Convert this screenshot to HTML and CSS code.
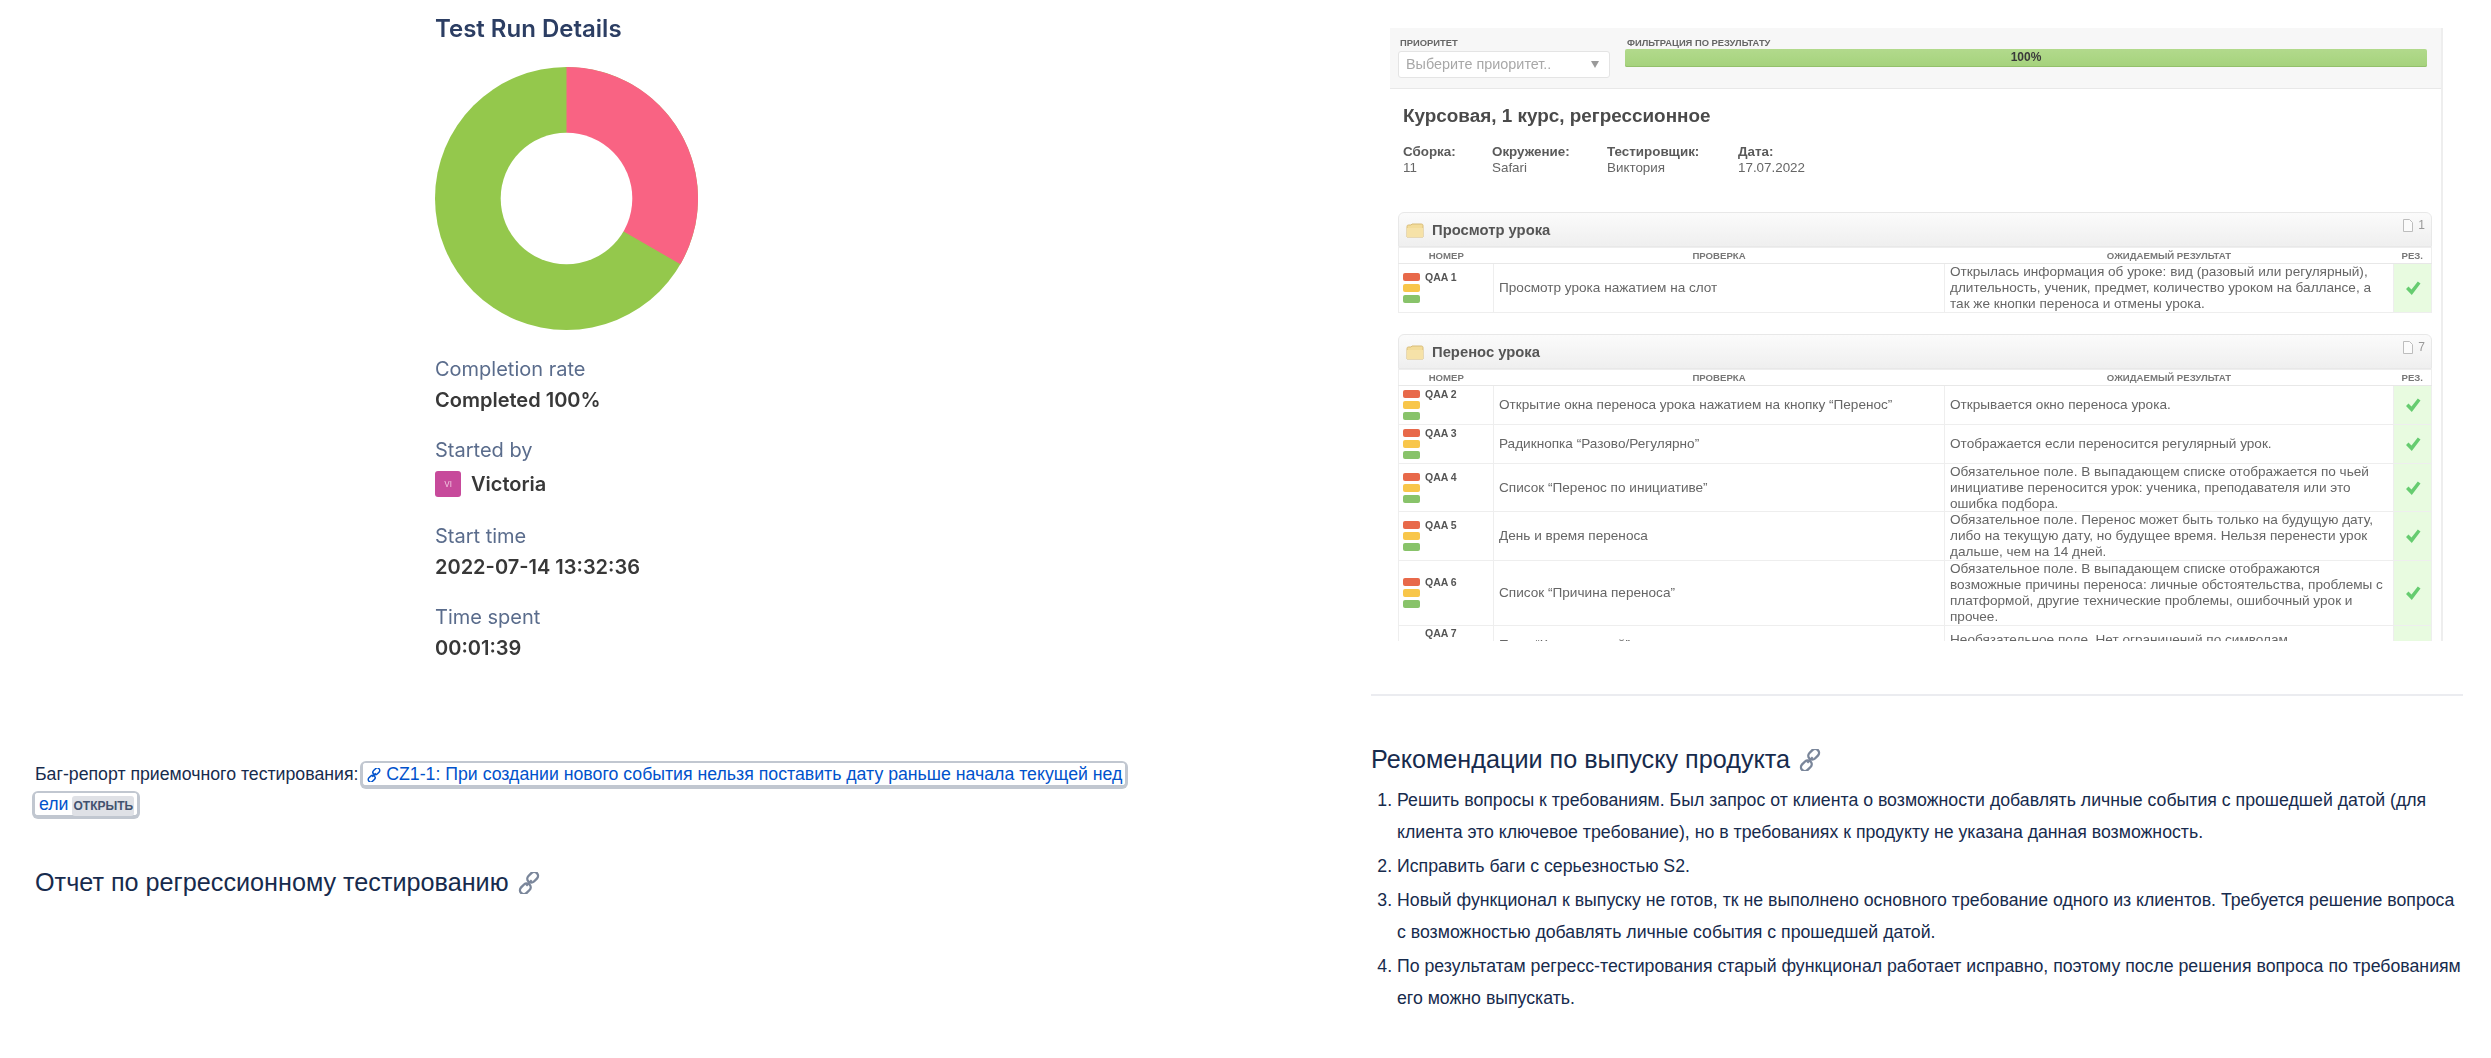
FILE: index.html
```html
<!DOCTYPE html>
<html lang="ru">
<head>
    <meta charset="UTF-8">
    <title>Отчет о тестировании</title>
    <link rel="stylesheet" href="styles.css">
</head>
<body>
    <svg class="defs" width="0" height="0">
        <symbol id="chain" viewBox="0 0 24 24">
            <g fill="none" stroke="currentColor" stroke-width="2.6">
                <rect x="9.5" y="1.5" width="13" height="8.5" rx="4.25" transform="rotate(-45 16 5.75)"/>
                <rect x="1.5" y="14" width="13" height="8.5" rx="4.25" transform="rotate(-45 8 18.25)"/>
                <path d="M9 15l6-6" />
            </g>
        </symbol>
        <symbol id="folder" viewBox="0 0 18 15">
            <path d="M1 3.5C1 2.5 1.6 2 2.5 2H5l1-1h9.500c.8 0 1.500.6 1.500 1.500V14H1z" fill="#f3dc9a" stroke="#d8bc78"/>
            <path d="M1 5h16v9H1z" fill="#f6e2a8"/>
        </symbol>
        <symbol id="doc" viewBox="0 0 10 13">
            <path d="M.5.5H6.500L9.500 3.500V12.500H.5z" fill="#fbfbfb" stroke="#bdbdbd"/>
        </symbol>
        <symbol id="tick" viewBox="0 0 16 16">
            <path d="M1 9l2.500-2.500L6.500 9.500 12.800 1.500 15.500 3.500 6.800 15z" fill="#66cc70"/>
        </symbol>
    </svg>

    <div class="page">
        <div class="col-left">
            <div class="details">
                <h3 class="details-title">Test Run Details</h3>
                <svg class="donut" width="263" height="263" viewBox="0 0 263 263">
                    <circle cx="131.500" cy="131.500" r="131.500" fill="#94c84c"/>
                    <path d="M131.500 131.500V0A131.500 131.500 0 0 1 245.400 197.250Z" fill="#f96383"/>
                    <circle cx="131.500" cy="131.500" r="65.800" fill="#fff"/>
                </svg>
                <div class="field first">Completion rate</div>
                <div class="value">Completed 100%</div>
                <div class="field">Started by</div>
                <div class="user">
                    <span class="avatar">VI</span>
                    <span class="value">Victoria</span>
                </div>
                <div class="field after-user">Start time</div>
                <div class="value">2022-07-14 13:32:36</div>
                <div class="field">Time spent</div>
                <div class="value">00:01:39</div>
            </div>

            <p class="bug-line">Баг-репорт приемочного тестирования: <a class="card-link" href="#"><svg class="card-icon"><use href="#chain"/></svg> CZ1-1: При создании нового события нельзя поставить дату раньше начала текущей недели<span class="lozenge">Открыть</span></a></p>

            <h2 class="heading regress">Отчет по регрессионному тестированию <svg class="anchor"><use href="#chain"/></svg></h2>
        </div>

        <div class="col-right">
            <div class="shot">
                <div class="filters">
                    <div class="filter-priority">
                        <div class="filter-label">Приоритет</div>
                        <div class="select">Выберите приоритет..<span class="caret"></span></div>
                    </div>
                    <div class="filter-result">
                        <div class="filter-label">Фильтрация по результату</div>
                        <div class="progress">100%</div>
                    </div>
                </div>

                <h4 class="run-title">Курсовая, 1 курс, регрессионное</h4>
                <div class="meta">
                    <div class="meta-item build"><b>Сборка:</b>11</div>
                    <div class="meta-item env"><b>Окружение:</b>Safari</div>
                    <div class="meta-item tester"><b>Тестировщик:</b>Виктория</div>
                    <div class="meta-item date"><b>Дата:</b>17.07.2022</div>
                </div>

                <div class="group">
                    <div class="group-head">
                        <svg class="folder"><use href="#folder"/></svg>
                        <span class="group-name">Просмотр урока</span>
                        <span class="group-count"><svg class="doc"><use href="#doc"/></svg>1</span>
                    </div>
                    <table class="cases">
                        <colgroup><col class="c-num"><col class="c-check"><col class="c-exp"><col class="c-res"></colgroup>
                        <tr><th>Номер</th><th>Проверка</th><th>Ожидаемый результат</th><th>Рез.</th></tr>
                        <tr>
                            <td class="num"><div class="num-wrap"><div class="bars"><i class="red"></i><i class="yellow"></i><i class="green"></i></div><b>QAA 1</b></div></td>
                            <td>Просмотр урока нажатием на слот</td>
                            <td>Открылась информация об уроке: вид (разовый или регулярный), длительность, ученик, предмет, количество уроком на баллансе, а так же кнопки переноса и отмены урока.</td>
                            <td class="res"><svg class="tick"><use href="#tick"/></svg></td>
                        </tr>
                    </table>
                </div>

                <div class="group second">
                    <div class="group-head">
                        <svg class="folder"><use href="#folder"/></svg>
                        <span class="group-name">Перенос урока</span>
                        <span class="group-count"><svg class="doc"><use href="#doc"/></svg>7</span>
                    </div>
                    <table class="cases">
                        <colgroup><col class="c-num"><col class="c-check"><col class="c-exp"><col class="c-res"></colgroup>
                        <tr><th>Номер</th><th>Проверка</th><th>Ожидаемый результат</th><th>Рез.</th></tr>
                        <tr>
                            <td class="num"><div class="num-wrap"><div class="bars"><i class="red"></i><i class="yellow"></i><i class="green"></i></div><b>QAA 2</b></div></td>
                            <td>Открытие окна переноса урока нажатием на кнопку “Перенос”</td>
                            <td>Открывается окно переноса урока.</td>
                            <td class="res"><svg class="tick"><use href="#tick"/></svg></td>
                        </tr>
                        <tr>
                            <td class="num"><div class="num-wrap"><div class="bars"><i class="red"></i><i class="yellow"></i><i class="green"></i></div><b>QAA 3</b></div></td>
                            <td>Радикнопка “Разово/Регулярно”</td>
                            <td>Отображается если переносится регулярный урок.</td>
                            <td class="res"><svg class="tick"><use href="#tick"/></svg></td>
                        </tr>
                        <tr>
                            <td class="num"><div class="num-wrap"><div class="bars"><i class="red"></i><i class="yellow"></i><i class="green"></i></div><b>QAA 4</b></div></td>
                            <td>Список “Перенос по инициативе”</td>
                            <td>Обязательное поле. В выпадающем списке отображается по чьей инициативе переносится урок: ученика, преподавателя или это ошибка подбора.</td>
                            <td class="res"><svg class="tick"><use href="#tick"/></svg></td>
                        </tr>
                        <tr>
                            <td class="num"><div class="num-wrap"><div class="bars"><i class="red"></i><i class="yellow"></i><i class="green"></i></div><b>QAA 5</b></div></td>
                            <td>День и время переноса</td>
                            <td>Обязательное поле. Перенос может быть только на будущую дату, либо на текущую дату, но будущее время. Нельзя перенести урок дальше, чем на 14 дней.</td>
                            <td class="res"><svg class="tick"><use href="#tick"/></svg></td>
                        </tr>
                        <tr>
                            <td class="num"><div class="num-wrap"><div class="bars"><i class="red"></i><i class="yellow"></i><i class="green"></i></div><b>QAA 6</b></div></td>
                            <td>Список “Причина переноса”</td>
                            <td>Обязательное поле. В выпадающем списке отображаются возможные причины переноса: личные обстоятельства, проблемы с платформой, другие технические проблемы, ошибочный урок и прочее.</td>
                            <td class="res"><svg class="tick"><use href="#tick"/></svg></td>
                        </tr>
                        <tr class="cut">
                            <td class="num"><div class="num-wrap"><div class="bars"><i class="olive"></i></div><b>QAA 7</b></div></td>
                            <td class="check">Поле “Комментарий”</td>
                            <td>Необязательное поле. Нет ограничений по символам.<br>&nbsp;</td>
                            <td class="res"><svg class="tick"><use href="#tick"/></svg></td>
                        </tr>
                    </table>
                </div>
            </div>

            <hr class="rule">

            <h2 class="heading recs">Рекомендации по выпуску продукта <svg class="anchor"><use href="#chain"/></svg></h2>
            <ol class="recs-list">
                <li>Решить вопросы к требованиям. Был запрос от клиента о возможности добавлять личные события с прошедшей датой (для клиента это ключевое требование), но в требованиях к продукту не указана данная возможность.</li>
                <li>Исправить баги с серьезностью S2.</li>
                <li>Новый функционал к выпуску не готов, тк не выполнено основного требование одного из клиентов. Требуется решение вопроса с возможностью добавлять личные события с прошедшей датой.</li>
                <li>По результатам регресс-тестирования старый функционал работает исправно, поэтому после решения вопроса по требованиям его можно выпускать.</li>
            </ol>
        </div>
    </div>
</body>
</html>
```

FILE: styles.css
```css
body {
    margin: 0;
    background: #ffffff;
    color: #172b4d;
    font-family: 'Liberation Sans', Arial, sans-serif;
    font-size: 17.720px;
}
.defs {
    position: absolute;
}
.page {
    display: flex;
    height: 1058px;
    overflow: hidden;
}
.col-left {
    width: 1371px;
    padding-left: 35px;
    box-sizing: border-box;
}
.col-right {
    width: 1092px;
    padding-top: 28px;
}

/* test run card */
.details {
    margin-left: 400px;
    padding-top: 13px;
    font-family: 'Inter', sans-serif;
    font-size: 20px;
    line-height: 31px;
    filter: blur(0.4px);
}
.details-title {
    margin: 0;
    color: #2c3e63;
    font-size: 24px;
    line-height: 32px;
    font-weight: 600;
}
.donut {
    display: block;
    margin-top: 22px;
}
.field {
    margin-top: 19px;
    color: #5a6c8c;
}
.field.first {
    margin-top: 24px;
}
.field.after-user {
    margin-top: 24px;
}
.value {
    color: #383838;
    font-weight: 600;
}
.user {
    display: flex;
    align-items: center;
    gap: 10px;
    height: 26px;
    margin-top: 5px;
}
.avatar {
    display: flex;
    align-items: center;
    justify-content: center;
    width: 26px;
    height: 26px;
    border-radius: 3px;
    background: #c74a9b;
    color: #f2c8e2;
    font-size: 8px;
}

/* bug report line */
.bug-line {
    width: 1092px;
    margin: 95px 0 0;
    line-height: 30px;
}
.card-link {
    padding: 1px 3px 1px 4px;
    border-radius: 3px;
    background: #ffffff;
    box-shadow: 0 1px 0 3px #c1c7d0;
    color: #0052cc;
    text-decoration: none;
    word-break: break-all;
    -webkit-box-decoration-break: clone;
    box-decoration-break: clone;
}
.card-icon {
    width: 14px;
    height: 14px;
    vertical-align: -2px;
}
.lozenge {
    margin-left: 4px;
    padding: 3px 1px;
    border-radius: 3px;
    background: #dfe1e6;
    color: #42526e;
    font-size: 12px;
    font-weight: bold;
    text-transform: uppercase;
}

.heading {
    margin: 0;
    color: #172b4d;
    font-size: 25.200px;
    font-weight: normal;
    line-height: 32px;
}
.heading.regress {
    margin-top: 45px;
}
.heading.recs {
    margin-top: 47px;
}
.anchor {
    width: 22px;
    height: 22px;
    margin-left: 2px;
    color: #7a869a;
    vertical-align: -3px;
}

/* pasted report screenshot */
.shot {
    height: 613px;
    margin-left: 19px;
    width: 1053px;
    box-sizing: border-box;
    border-right: 2px solid #eeeeee;
    overflow: hidden;
    color: #666666;
    font-size: 13.600px;
    line-height: 15.900px;
    filter: blur(0.45px);
}
.filters {
    display: flex;
    gap: 15px;
    height: 61px;
    padding: 8px 14px 0 8px;
    box-sizing: border-box;
    border-bottom: 1px solid #e8e8e8;
    background: #f7f7f7;
}
.filter-label {
    padding-left: 2px;
    color: #666666;
    font-size: 9.400px;
    font-weight: bold;
    line-height: 14px;
    text-transform: uppercase;
}
.filter-priority {
    width: 212px;
}
.filter-result {
    flex: 1;
}
.select {
    display: flex;
    align-items: center;
    justify-content: space-between;
    height: 27px;
    margin-top: 1px;
    padding: 0 10px 0 7px;
    box-sizing: border-box;
    border: 1px solid #e4e4e4;
    border-radius: 3px;
    background: #ffffff;
    color: #a8a8a8;
    font-size: 14.400px;
}
.caret {
    width: 0;
    height: 0;
    border-left: 4.500px solid transparent;
    border-right: 4.500px solid transparent;
    border-top: 7px solid #9a9a9a;
}
.progress {
    height: 18px;
    margin-top: -1px;
    border-radius: 2px;
    background: linear-gradient(#b2da8c, #a5d27c);
    box-shadow: inset 0 -1px 0 #93c06b;
    color: #3a3a3a;
    font-size: 12px;
    font-weight: bold;
    line-height: 17px;
    text-align: center;
}
.run-title {
    margin: 15px 0 0 13px;
    color: #4a4a4a;
    font-size: 18.900px;
    font-weight: bold;
    line-height: 24px;
}
.meta {
    display: flex;
    margin: 16px 0 0 13px;
    font-size: 13.400px;
    line-height: 15.500px;
}
.meta-item b {
    display: block;
    color: #5a5a5a;
}
.meta-item.build {
    width: 89px;
}
.meta-item.env {
    width: 115px;
}
.meta-item.tester {
    width: 131px;
}
.group {
    width: 1034px;
    margin: 37px 0 0 8px;
}
.group.second {
    margin-top: 21px;
}
.group-head {
    display: flex;
    align-items: flex-start;
    height: 35px;
    box-sizing: border-box;
    padding: 5px 6px 0 7px;
    border: 1px solid #e8e8e8;
    border-radius: 6px 6px 0 0;
    background: linear-gradient(#fbfbfb, #efefef);
}
.folder {
    width: 18px;
    height: 15px;
    margin-top: 5px;
}
.group-name {
    flex: 1;
    margin: 5px 0 0 8px;
    color: #555555;
    font-size: 14.800px;
    font-weight: bold;
}
.group-count {
    display: flex;
    align-items: center;
    gap: 5px;
    color: #999999;
    font-size: 12px;
}
.doc {
    width: 10px;
    height: 13px;
}
.cases {
    width: 100%;
    table-layout: fixed;
    border-collapse: collapse;
    border: 1px solid #eeeeee;
    background: #ffffff;
}
.c-num {
    width: 95px;
}
.c-check {
    width: 451px;
}
.c-res {
    width: 38px;
}
.cases th {
    height: 15px;
    padding: 0;
    color: #777777;
    font-size: 9.600px;
    line-height: 15px;
    text-transform: uppercase;
    border-bottom: 1px solid #e8e8e8;
}
.cases td {
    height: 38px;
    padding: 0 4px 0 5px;
    border: 1px solid #eeeeee;
}
.cases td.num {
    padding: 0 4px;
}
.num-wrap {
    display: flex;
    gap: 5px;
    font-size: 10.500px;
    line-height: 8px;
}
.num-wrap b {
    color: #555555;
}
.bars {
    display: flex;
    flex-direction: column;
    gap: 3px;
}
.bars i {
    display: block;
    width: 17px;
    height: 8px;
    border-radius: 2px;
}
.bars .red {
    background: #e8694a;
}
.bars .yellow {
    background: #f8c64a;
}
.bars .green {
    background: #88c36a;
}
.bars .olive {
    margin-top: 12px;
    background: #c0b070;
}
.cut td.num {
    padding-top: 3px;
    vertical-align: top;
}
.cut td.check {
    padding-bottom: 6px;
}
.cases td.res {
    padding: 0;
    background: #e8fbe0;
    text-align: center;
}
.tick {
    display: block;
    width: 16px;
    height: 16px;
    margin: 0 auto;
}

/* recommendations */
.rule {
    height: 2px;
    margin: 53px 0 0;
    border: 0;
    background: #ebecf0;
}
.recs-list {
    margin: 9px -2px 0 0;
    padding-left: 26px;
    line-height: 32px;
}
.recs-list li {
    margin-bottom: 2px;
}
```
